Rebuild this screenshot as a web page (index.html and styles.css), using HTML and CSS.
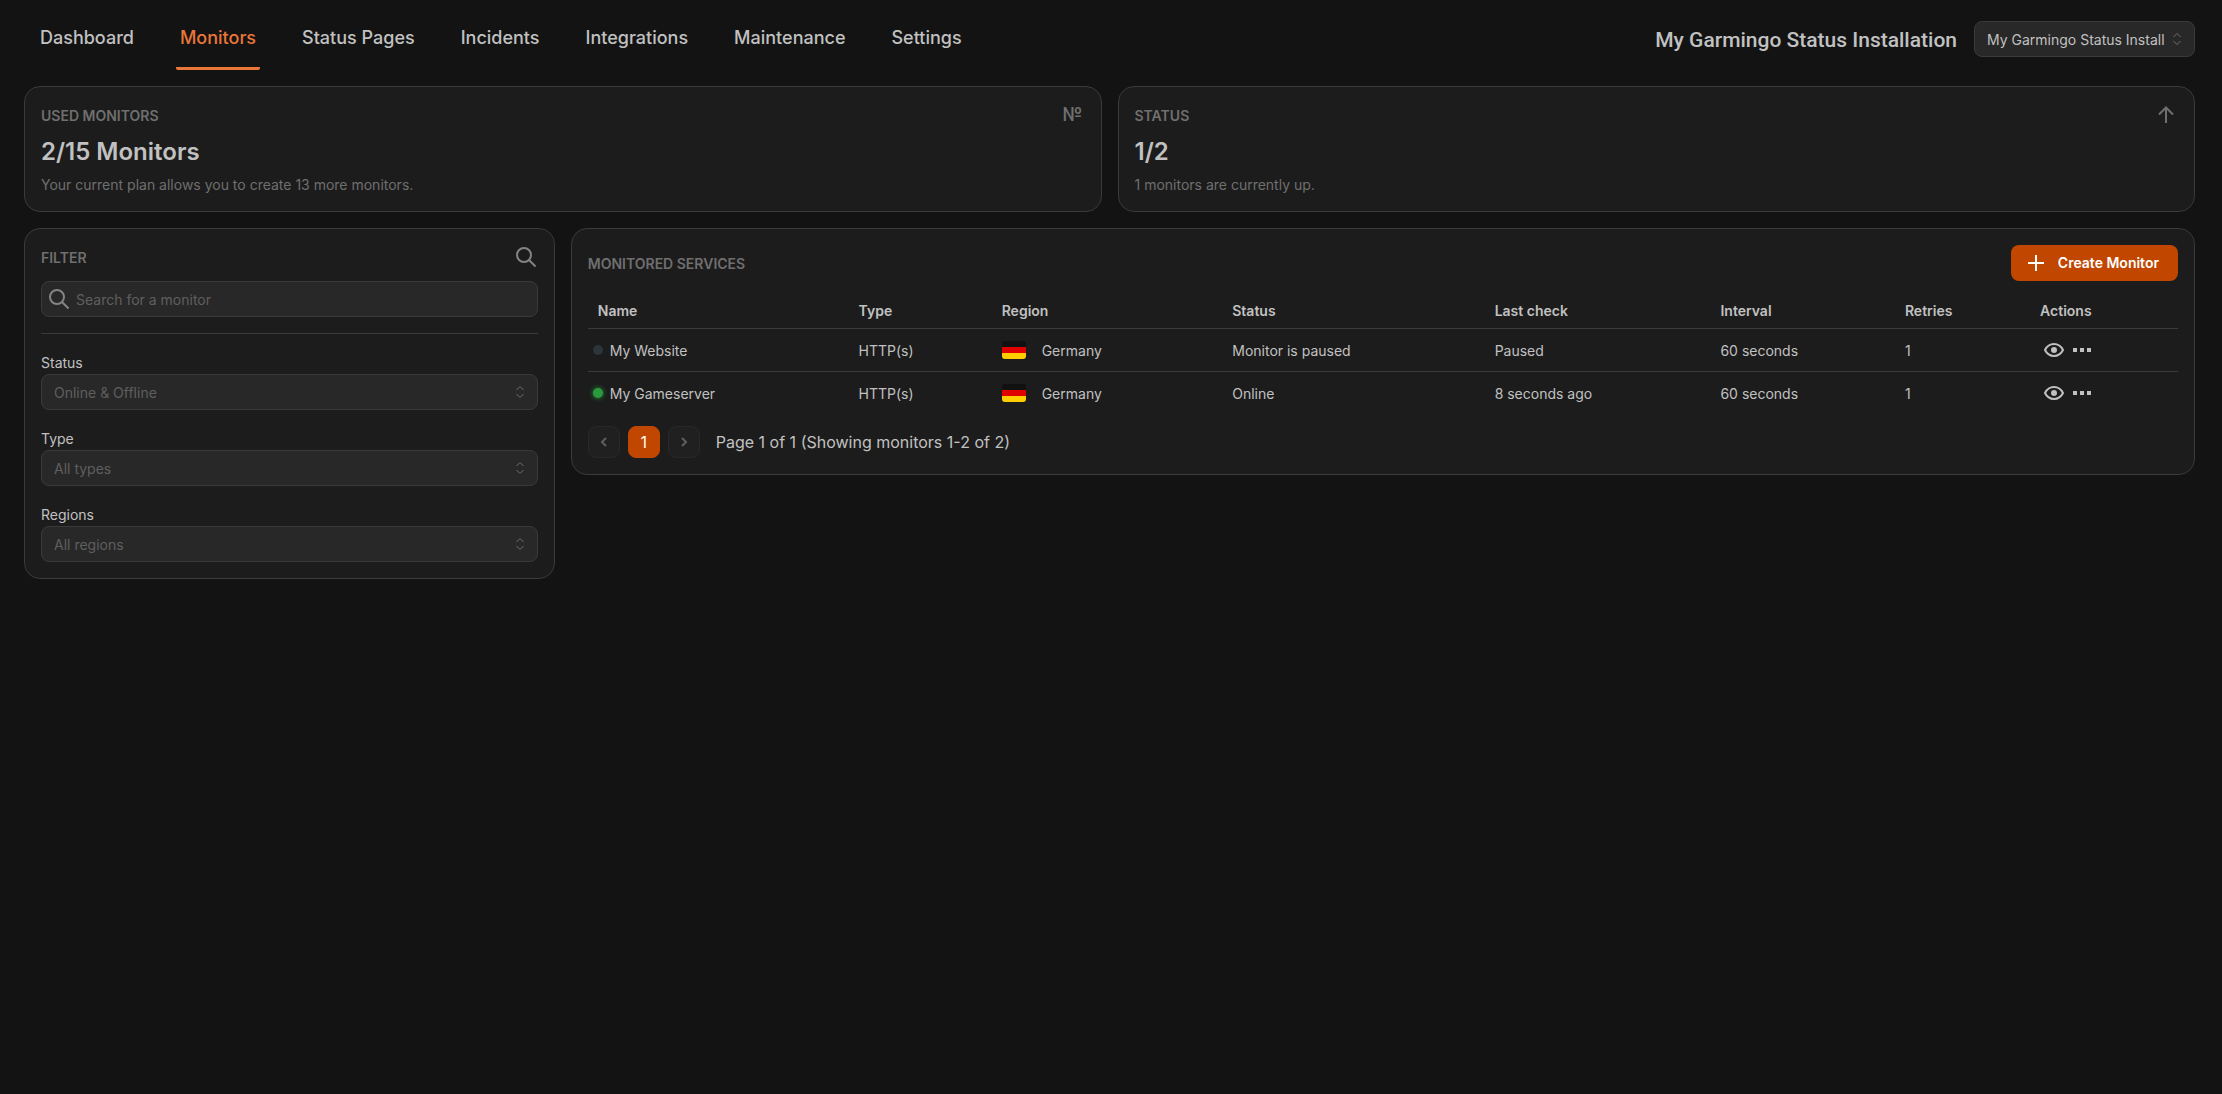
FILE: index.html
```html
<!DOCTYPE html>
<html lang="en">
<head>
<meta charset="utf-8">
<meta name="viewport" content="width=device-width, initial-scale=1">
<title>Monitors</title>
<link rel="stylesheet" href="styles.css">
</head>
<body>
<svg class="sprite" aria-hidden="true">
  <symbol id="search" viewBox="0 0 24 24"><circle cx="10" cy="10" r="7" /><path d="M15 15l6.500 6.500" /></symbol>
  <symbol id="arrow-up" viewBox="0 0 24 24"><path d="M12 20V5M5 11.500l7-7 7 7" /></symbol>
  <symbol id="plus" viewBox="0 0 24 24"><path d="M12 4v16M4 12h16" /></symbol>
  <symbol id="updown" viewBox="0 0 16 16"><path d="M4.500 6L8 2.500 11.500 6M4.500 10L8 13.500 11.500 10" /></symbol>
  <symbol id="left" viewBox="0 0 16 16"><path d="M10 4L6 8l4 4" /></symbol>
  <symbol id="right" viewBox="0 0 16 16"><path d="M6 4l4 4-4 4" /></symbol>
  <symbol id="eye" viewBox="0 0 24 24"><path d="M3 12c2-4 5-6 9-6s7 2 9 6c-2 4-5 6-9 6s-7-2-9-6z" /><circle class="solid" cx="12" cy="12" r="3" /></symbol>
  <symbol id="dots" viewBox="0 0 24 24"><path class="solid" d="M3 10h4v4H3zM10 10h4v4h-4zM17 10h4v4h-4z" /></symbol>
  <symbol id="flag-de" viewBox="0 0 24 18"><path fill="#111" d="M0 0h24v6H0z" /><path fill="#e00000" d="M0 6h24v6H0z" /><path fill="#ffce00" d="M0 12h24v6H0z" /></symbol>
</svg>

<header class="topbar">
  <nav class="tabs" aria-label="Main">
    <a class="tab" href="#">Dashboard</a>
    <a class="tab active" href="#" aria-current="page">Monitors</a>
    <a class="tab" href="#">Status Pages</a>
    <a class="tab" href="#">Incidents</a>
    <a class="tab" href="#">Integrations</a>
    <a class="tab" href="#">Maintenance</a>
    <a class="tab" href="#">Settings</a>
  </nav>
  <div class="installation">
    <label class="installation-name" for="installation">My Garmingo Status Installation</label>
    <div class="select-wrap installation-select">
      <select class="field" id="installation"><option>My Garmingo Status Install</option></select>
      <svg class="icon-small"><use href="#updown" /></svg>
    </div>
  </div>
</header>

<main class="content">
  <section class="card stat">
    <div class="card-head"><h2 class="card-title">USED MONITORS</h2><span class="numero">№</span></div>
    <p class="figure">2/15 Monitors</p>
    <p class="note">Your current plan allows you to create 13 more monitors.</p>
  </section>
  <section class="card stat">
    <div class="card-head"><h2 class="card-title">STATUS</h2><svg class="icon muted"><use href="#arrow-up" /></svg></div>
    <p class="figure">1/2</p>
    <p class="note">1 monitors are currently up.</p>
  </section>

  <section class="card filter">
    <div class="card-head"><h2 class="card-title">FILTER</h2><svg class="icon search-icon"><use href="#search" /></svg></div>
    <div class="search">
      <svg class="icon search-icon"><use href="#search" /></svg>
      <input class="field" type="search" placeholder="Search for a monitor" aria-label="Search for a monitor">
    </div>
    <hr class="divider">
    <div class="filter-fields">
      <div>
        <label class="label" for="status">Status</label>
        <div class="select-wrap"><select class="field hint" id="status"><option>Online &amp; Offline</option></select><svg class="icon-small"><use href="#updown" /></svg></div>
      </div>
      <div>
        <label class="label" for="type">Type</label>
        <div class="select-wrap"><select class="field hint" id="type"><option>All types</option></select><svg class="icon-small"><use href="#updown" /></svg></div>
      </div>
      <div>
        <label class="label" for="regions">Regions</label>
        <div class="select-wrap"><select class="field hint" id="regions"><option>All regions</option></select><svg class="icon-small"><use href="#updown" /></svg></div>
      </div>
    </div>
  </section>

  <section class="card services">
    <div class="card-head">
      <h2 class="card-title">MONITORED SERVICES</h2>
      <button class="create" type="button"><svg class="icon"><use href="#plus" /></svg>Create Monitor</button>
    </div>
    <table class="table">
      <colgroup><col class="c-name"><col class="c-type"><col class="c-region"><col class="c-status"><col class="c-check"><col class="c-interval"><col class="c-retries"><col class="c-actions"></colgroup>
      <thead>
        <tr><th>Name</th><th>Type</th><th>Region</th><th>Status</th><th>Last check</th><th>Interval</th><th>Retries</th><th>Actions</th></tr>
      </thead>
      <tbody>
        <tr>
          <td class="name-cell"><div class="name"><span class="dot"></span>My Website</div></td>
          <td>HTTP(s)</td>
          <td><div class="region"><svg class="flag"><use href="#flag-de" /></svg>Germany</div></td>
          <td>Monitor is paused</td><td>Paused</td><td>60 seconds</td><td>1</td>
          <td><div class="actions"><button class="icon-button" type="button" aria-label="View"><svg class="icon"><use href="#eye" /></svg></button><button class="icon-button" type="button" aria-label="More"><svg class="icon"><use href="#dots" /></svg></button></div></td>
        </tr>
        <tr>
          <td class="name-cell"><div class="name"><span class="dot online"></span>My Gameserver</div></td>
          <td>HTTP(s)</td>
          <td><div class="region"><svg class="flag"><use href="#flag-de" /></svg>Germany</div></td>
          <td>Online</td><td>8 seconds ago</td><td>60 seconds</td><td>1</td>
          <td><div class="actions"><button class="icon-button" type="button" aria-label="View"><svg class="icon"><use href="#eye" /></svg></button><button class="icon-button" type="button" aria-label="More"><svg class="icon"><use href="#dots" /></svg></button></div></td>
        </tr>
      </tbody>
    </table>
    <div class="pagination">
      <button class="page" type="button" disabled aria-label="Previous page"><svg class="icon-small"><use href="#left" /></svg></button>
      <button class="page current" type="button" aria-current="page">1</button>
      <button class="page" type="button" disabled aria-label="Next page"><svg class="icon-small"><use href="#right" /></svg></button>
      <span class="page-info">Page 1 of 1 (Showing monitors 1-2 of 2)</span>
    </div>
  </section>
</main>
</body>
</html>
```
FILE: styles.css
```css
* { box-sizing: border-box; }

body {
  margin: 0;
  background: #131313;
  color: #c1c1c1;
  font: 14px/20px Inter, "Liberation Sans", sans-serif;
}

h2, p { margin: 0; }
button, input, select { font: inherit; color: inherit; }

.sprite { position: absolute; width: 0; height: 0; }

svg { display: block; fill: none; stroke: currentColor; stroke-width: 2; flex: none; }
.solid { fill: currentColor; stroke: none; }
.icon { width: 24px; height: 24px; }
.icon-small { width: 16px; height: 16px; stroke-width: 1; }
.muted { color: #6f6f6f; }
.search-icon { color: #848484; }

/* Top bar */
.topbar {
  display: flex;
  justify-content: space-between;
  padding: 0 27px 16px 36px;
}
.tabs { display: flex; gap: 38px; }
.tab {
  height: 70px;
  padding: 26px 4px 0;
  border-bottom: 3px solid transparent;
  border-radius: 2px;
  color: #c1c1c1;
  font-size: 18px;
  font-weight: 500;
  line-height: 24px;
  text-decoration: none;
}
.tab.active { color: #ea7638; border-bottom-color: #ea7638; }
.installation { display: flex; align-items: center; gap: 17px; padding-top: 8px; }
.installation-name { padding-top: 2px; font: 500 21px/28px Roboto, sans-serif; }
.installation-select { width: 221px; }

/* Cards */
.content {
  display: grid;
  grid-template-columns: repeat(4, minmax(0, 1fr));
  gap: 16px;
  align-items: start;
  padding: 0 27px 16px 24px;
}
.card {
  padding: 16px;
  background: #1c1c1c;
  border: 1px solid #3a3a3a;
  border-radius: 16px;
}
.stat { grid-column: span 2; }
.services { grid-column: span 3; }
.card-head { display: flex; align-items: center; justify-content: space-between; }
.card-title { padding-top: 2px; color: #6f6f6f; font-size: 14px; line-height: 20px; font-weight: 600; }
.numero { width: 24px; color: #6f6f6f; font-size: 18px; line-height: 24px; font-weight: 600; text-align: center; }
.figure { padding: 9px 0 7px; font-size: 24px; line-height: 32px; font-weight: 600; }
.note { color: #6f6f6f; }

/* Form fields */
.field {
  display: block;
  width: 100%;
  height: 36px;
  padding: 1px 12px 0;
  appearance: none;
  background: #282828;
  border: 1px solid #3a3a3a;
  border-radius: 8px;
  outline: 0;
}
.field::placeholder { color: #5f5f5f; opacity: 1; }
.hint { color: #5f5f5f; }
.select-wrap, .search { display: grid; align-items: center; }
.select-wrap > *, .search > * { grid-area: 1 / 1; }
.select-wrap .icon-small { justify-self: end; margin-right: 10px; color: #6f6f6f; pointer-events: none; }
.search { margin-top: 12px; }
.search .icon { z-index: 1; margin-left: 6px; }
.search .field { padding-left: 34px; }
.divider { height: 1px; margin: 16px 0 20px; border: 0; background: #3a3a3a; }
.filter-fields { display: grid; gap: 20px; }
.label { display: block; padding-bottom: 2px; line-height: 18px; }

/* Services */
.create {
  display: flex;
  align-items: center;
  gap: 10px;
  height: 36px;
  padding: 0 19px 0 13px;
  background: #c14600;
  border: 0;
  border-radius: 8px;
  color: #fff;
  font-weight: 600;
}
.table { width: 100%; margin-top: 12px; table-layout: fixed; border-collapse: collapse; }
.c-name { width: 16.4%; }
.c-type { width: 9%; }
.c-region { width: 14.5%; }
.c-status { width: 16.5%; }
.c-check { width: 14.2%; }
.c-interval { width: 11.6%; }
.c-retries { width: 8.5%; }
.c-actions { width: 9.3%; }
th, td { padding: 0 10px; text-align: left; }
th { height: 35px; padding-top: 1px; font-weight: 600; }
td { height: 43px; padding-top: 2px; border-top: 1px solid #3a3a3a; }
.name-cell { padding-left: 5px; }
.name, .region, .actions { display: flex; align-items: center; }
.name { gap: 7px; }
.dot, .flag, .icon-button { margin-bottom: 2px; }
.dot { width: 10px; height: 10px; border-radius: 50%; background: #2c3539; }
.dot.online { background: #2b9a3e; box-shadow: 0 0 4px 1px #1f6b2c; }
.region { gap: 16px; }
.flag { width: 24px; height: 18px; border-radius: 3px; stroke: none; }
.actions { gap: 4px; padding-left: 2px; }
.icon-button { padding: 0; background: none; border: 0; }

.pagination { display: flex; align-items: center; gap: 8px; margin-top: 12px; font-size: 16px; }
.page {
  display: grid;
  place-items: center;
  width: 32px;
  height: 32px;
  padding: 0;
  background: #202020;
  border: 1px solid #282828;
  border-radius: 8px;
  color: #5f5f5f;
}
.page .icon-small { stroke-width: 2; }
.page.current { background: #c14600; border-color: #c14600; color: #fff; }
.page-info { margin-left: 8px; }
```
